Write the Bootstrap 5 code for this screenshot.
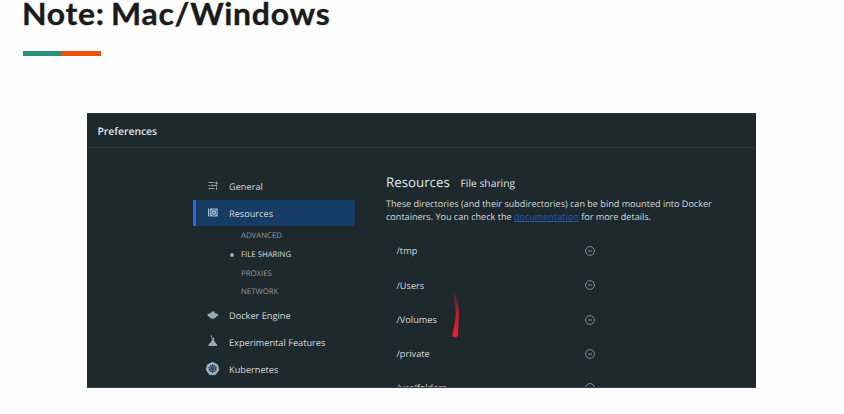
<!DOCTYPE html>
<html lang="en">
<head>
<meta charset="utf-8">
<meta name="viewport" content="width=device-width, initial-scale=1">
<title>Note: Mac/Windows</title>
<link href="https://cdn.jsdelivr.net/npm/bootstrap@5.3.0/dist/css/bootstrap.min.css" rel="stylesheet">
<style>
body{background:#fefefe;font-family:"Open Sans","Noto Sans",sans-serif;height:414px}
.slide-title{width:fit-content;font:700 29.5px/32px Lato,sans-serif;color:#1b1b1b;letter-spacing:.67px;word-spacing:-2px;margin:-2px 0 0 22px;height:32px;white-space:nowrap;transform:scaleX(1.082);transform-origin:0 0;-webkit-text-stroke:.35px #1b1b1b}
.accent{width:78px;height:5px;margin:21px 0 0 23px}
.accent-teal{background:#2b917e}.accent-orange{background:#eb5207}
.prefs{width:669px;height:275px;margin:57px 0 0 87px;background:#1e292d;color:#d5d9da;font-size:9.2px;border-top:2px solid #263135;border-bottom:1px solid #334044;text-rendering:geometricPrecision}
.prefs-head{height:33px;padding:3px 0 0 10.5px;border-bottom:1px solid #29353a;font-size:10.35px;font-weight:600;color:#e2e5e6}
.side{width:162px;margin-left:106px;padding-top:25px}
.side-item{height:26.6px;color:#d5d9da;padding:0 0 0 10px;white-space:nowrap}
.side-item span{padding-top:1.6px}
.side-item svg{width:20px;height:20px;margin-right:6px;flex:none;overflow:visible}
.side-item.current{background:#163b65;box-shadow:inset 3px 0 #2b69e9}
.sub-items{height:76px;padding:1.3px 0 0 48px;font-size:7.8px;color:#92999c}
.sub-item{height:18.8px;white-space:nowrap}
.sub-item.current{color:#d9dddf}
.sub-item.current::before{content:"";width:4px;height:4px;border-radius:50%;background:#92aab5;margin:-1px 7px 0 -11px}
.pane{margin-left:31px;width:345px;padding-top:25px}
.pane-title{font-size:13.3px;line-height:18px;height:18px;color:#dfe3e4}
.pane-sub{font-size:10.3px;margin-left:10.700px}
.intro{font-size:9.08px;line-height:13.5px;margin:5.5px 0 0;height:37.5px;white-space:nowrap}
.intro a{color:#2159b5;text-decoration-thickness:.5px}
.share{height:34.3px;width:209px;padding-left:10.5px}
.share svg{width:10px;height:10px;flex:none}
.trail{position:absolute;left:365px;top:174px;width:8px;height:50px}
</style>
<script src="https://cdn.jsdelivr.net/npm/bootstrap@5.3.0/dist/js/bootstrap.bundle.min.js"></script>
</head>
<body class="overflow-hidden">
<h1 class="slide-title">Note: Mac/Windows</h1>
<div class="accent d-flex"><div class="accent-teal w-50"></div><div class="accent-orange w-50"></div></div>
<main class="prefs position-relative overflow-hidden">
  <header class="prefs-head d-flex align-items-center"><span>Preferences</span></header>
  <div class="d-flex align-items-start">
    <nav class="side">
      <a class="side-item d-flex align-items-center text-decoration-none"><svg viewBox="0 0 20 20" fill="none" stroke="#9caeb8" stroke-width=".9"><path d="M5.500 6.500h6M5.500 9.500h2M9 9.500h5.500M5.500 12.500h6M13.500 5.500v3M12 7h3M9 8.300v2.600M13.500 10.500v3.500"/></svg><span>General</span></a>
      <a class="side-item current d-flex align-items-center text-decoration-none"><svg viewBox="0 0 20 20"><rect x="5" y="5.500" width="1.300" height="8" fill="#9db7d0"/><rect x="7" y="5.500" width="7.800" height="8" fill="#9db7d0"/><circle cx="10.900" cy="9.500" r="2.900" fill="none" stroke="#294d73" stroke-width=".8"/><circle cx="10.900" cy="9.500" r="1" fill="#47698b"/></svg><span>Resources</span></a>
      <div class="sub-items">
        <div class="sub-item d-flex align-items-center">ADVANCED</div>
        <div class="sub-item current d-flex align-items-center">FILE SHARING</div>
        <div class="sub-item d-flex align-items-center">PROXIES</div>
        <div class="sub-item d-flex align-items-center">NETWORK</div>
      </div>
      <a class="side-item d-flex align-items-center text-decoration-none"><svg viewBox="0 0 20 20" fill="#94abba"><path d="M4.500 8.500l2 .2 1-.9h1V6.500h3v1.300l2 1.200 1.700-.8-.5 2.800-1.200.5c-1 1.800-2.500 2.200-4 2.200-2 0-3-1-3.600-2.200-1-.3-1.500-1.200-1.400-2.800z"/></svg><span>Docker Engine</span></a>
      <a class="side-item d-flex align-items-center text-decoration-none"><svg viewBox="0 0 20 20" fill="#94abba"><path d="M8.200 5.700h3V9l2.800 3.700v1.300H5.500v-1.300L8.700 9V6.200h-.5zM7.800 3.100l1.500.7-.4 1.400-1-.6z"/><path d="M9 7.500h1.300" stroke="#1f292d" stroke-width=".6"/></svg><span>Experimental Features</span></a>
      <a class="side-item d-flex align-items-center text-decoration-none"><svg viewBox="0 0 20 20"><path d="M9.500 3.300l5 2.400 1.400 5.200-3.500 4.700H6.700l-3.500-4.700 1.300-5.200z" fill="#9bb6c9" stroke="#9bb6c9" stroke-width=".8" stroke-linejoin="round"/><g fill="none" stroke="#2b404d" stroke-width=".9"><circle cx="9.600" cy="9.700" r="3.200"/><path d="M9.600 5.200v9M5.400 8.600l8.400 2.200M13.800 8.600l-8.400 2.200M7 13.200l5-7M12.200 13.200l-5-7"/></g></svg><span>Kubernetes</span></a>
    </nav>
    <section class="pane">
      <div class="pane-title d-flex align-items-baseline"><span>Resources</span><span class="pane-sub">File sharing</span></div>
      <p class="intro">These directories (and their subdirectories) can be bind mounted into Docker<br>containers. You can check the <a href="#">documentation</a> for more details.</p>
      <div class="share d-flex align-items-center justify-content-between"><span>/tmp</span><svg viewBox="0 0 10 10" fill="none" stroke="#8398a1" stroke-width=".95"><circle cx="5" cy="5" r="4.400"/><path d="M3 5h4"/></svg></div>
      <div class="share d-flex align-items-center justify-content-between"><span>/Users</span><svg viewBox="0 0 10 10" fill="none" stroke="#8398a1" stroke-width=".95"><circle cx="5" cy="5" r="4.400"/><path d="M3 5h4"/></svg></div>
      <div class="share d-flex align-items-center justify-content-between"><span>/Volumes</span><svg viewBox="0 0 10 10" fill="none" stroke="#8398a1" stroke-width=".95"><circle cx="5" cy="5" r="4.400"/><path d="M3 5h4"/></svg></div>
      <div class="share d-flex align-items-center justify-content-between"><span>/private</span><svg viewBox="0 0 10 10" fill="none" stroke="#8398a1" stroke-width=".95"><circle cx="5" cy="5" r="4.400"/><path d="M3 5h4"/></svg></div>
      <div class="share d-flex align-items-center justify-content-between"><span>/var/folders</span><svg viewBox="0 0 10 10" fill="none" stroke="#8398a1" stroke-width=".95"><circle cx="5" cy="5" r="4.400"/><path d="M3 5h4"/></svg></div>
    </section>
  </div>
  <svg class="trail" viewBox="0 0 8 50"><defs><linearGradient id="fade" x1="0" y1="0" x2="0" y2="1"><stop offset="0" stop-color="#d61c35" stop-opacity=".1"/><stop offset=".5" stop-color="#d61c35" stop-opacity=".85"/><stop offset="1" stop-color="#fa1c38"/></linearGradient></defs><path d="M0 0C3 6 7 13 7 25L6 46.500Q5.500 48.200 3.500 48.200 0 48.200.300 46 2.500 37 3.700 27C4 16 2 8 0 0z" fill="url(#fade)"/></svg>
</main>
</body>
</html>
